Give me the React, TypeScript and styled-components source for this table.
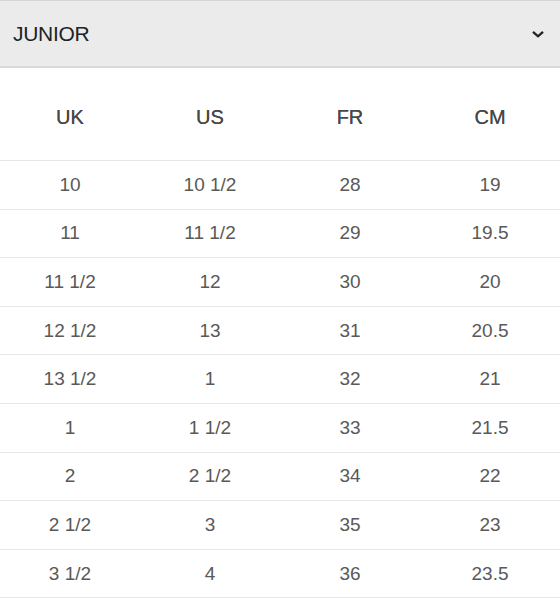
import React from "react";
import styled, { createGlobalStyle } from "styled-components";

const Global = createGlobalStyle`
  html, body { margin: 0; padding: 0; background: #fff; }
  body { font-family: "Liberation Sans", Arial, sans-serif; }
`;

const Wrap = styled.div`
  width: 560px;
`;

const Header = styled.div`
  box-sizing: border-box;
  height: 68px;
  background: #ebebeb;
  border-top: 1px solid #d6d6d6;
  border-bottom: 2px solid #d9d9d9;
  display: flex;
  align-items: center;
  justify-content: space-between;
  padding: 0 14px 0 13px;
`;

const Title = styled.span`
  font-size: 21px;
  color: #222;
  letter-spacing: -0.3px;
`;

const Table = styled.div`
  display: grid;
  grid-template-columns: repeat(4, 140px);
`;

const Row = styled.div`
  display: contents;
`;

const Cell = styled.div<{ $head?: boolean }>`
  display: flex;
  align-items: center;
  justify-content: center;
  box-sizing: border-box;
  height: ${(p) => (p.$head ? "93px" : "48.6px")};
  padding-top: ${(p) => (p.$head ? "7px" : "0")};
  border-bottom: 1px solid #e6e6e6;
  font-size: ${(p) => (p.$head ? "20px" : "19px")};
  color: ${(p) => (p.$head ? "#484848" : "#595959")};
  text-shadow: ${(p) => (p.$head ? "0 0 0.4px #484848" : "none")};
`;

const Chevron = () => (
  <svg width="16" height="10" viewBox="0 0 16 10">
    <path d="M3 2.8 L8 7.3 L13 2.8" fill="none" stroke="#222" strokeWidth="2.3" />
  </svg>
);

const rows = [
  ["10", "10 1/2", "28", "19"],
  ["11", "11 1/2", "29", "19.5"],
  ["11 1/2", "12", "30", "20"],
  ["12 1/2", "13", "31", "20.5"],
  ["13 1/2", "1", "32", "21"],
  ["1", "1 1/2", "33", "21.5"],
  ["2", "2 1/2", "34", "22"],
  ["2 1/2", "3", "35", "23"],
  ["3 1/2", "4", "36", "23.5"],
];

export default function App() {
  return (
    <Wrap>
      <Global />
      <Header>
        <Title>JUNIOR</Title>
        <Chevron />
      </Header>
      <Table>
        <Row>
          {["UK", "US", "FR", "CM"].map((h) => (
            <Cell $head key={h}>{h}</Cell>
          ))}
        </Row>
        {rows.map((r, i) => (
          <Row key={i}>
            {r.map((c, j) => (
              <Cell key={j}>{c}</Cell>
            ))}
          </Row>
        ))}
      </Table>
    </Wrap>
  );
}
